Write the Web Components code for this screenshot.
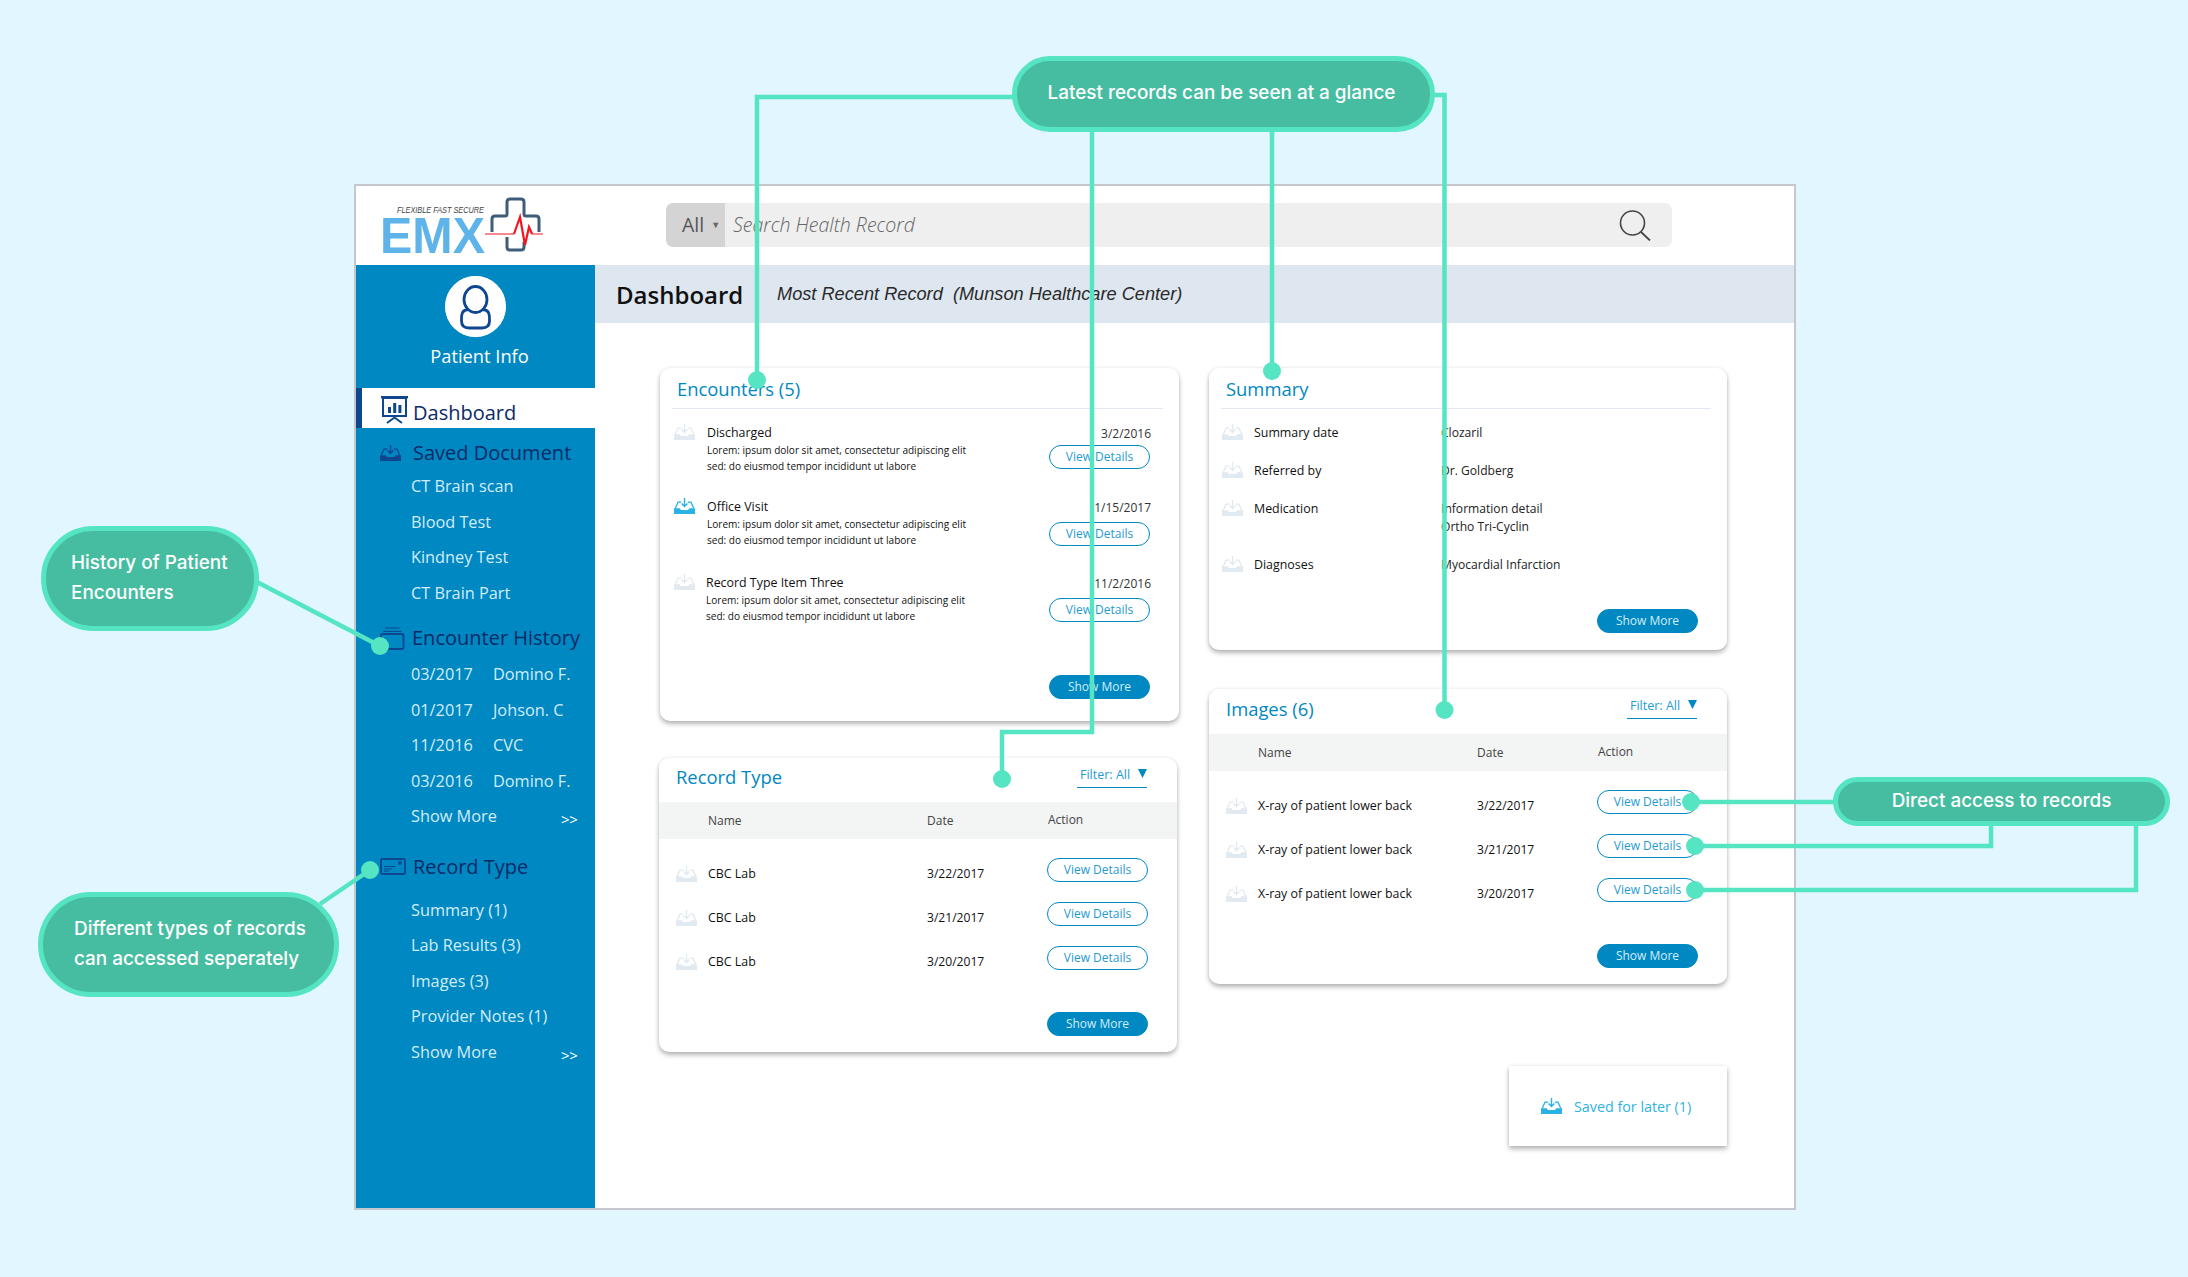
<!DOCTYPE html>
<html lang="en"><head><meta charset="utf-8"><title>EMX Dashboard</title>
<style>
html,body{margin:0;padding:0}
body{width:2188px;height:1277px;background:#E1F6FE;position:relative;overflow:hidden;font-family:"Open Sans","Noto Sans",sans-serif}
</style>
<script>
const BLUE='#0088C2',NAVY='#0B2A66',ICON='#0E4690',LINE='#55E5C2';
const tray=(c)=>`<svg width="21" height="16" viewBox="0 0 21 16" style="display:block"><path d="M10.5 0V8M7.6 5.4l2.9 3 2.9-3" fill="none" stroke="${c}" stroke-width="1.4"/><path d="M1.2 10.5L4 4.2H7.3M13.7 4.2H17l2.8 6.3" fill="none" stroke="${c}" stroke-width="1.3"/><path d="M0 10.2H5.6L7 12H14L15.4 10.2H21V16H0Z" fill="${c}"/></svg>`;
const icons={
 dash:`<svg width="28" height="28" viewBox="0 0 28 28" style="display:block"><path d="M0 1.2H27" stroke="${ICON}" stroke-width="2.4"/><rect x="2" y="2" width="23" height="18" fill="none" stroke="${ICON}" stroke-width="2"/><path d="M7 11h3v6H7zM12.2 7h3v10h-3zM17.4 9h3v8h-3z" fill="${ICON}"/><path d="M13.5 20v2M13.5 21.5L6 27M13.5 21.5L21 27" stroke="${ICON}" stroke-width="2" fill="none"/></svg>`,
 tray:`<div style="width:21px">${tray(ICON)}</div>`,
 hist:`<svg width="25" height="23" viewBox="0 0 25 23" style="display:block"><rect x="1" y="7" width="22.5" height="15" rx="1.5" fill="none" stroke="${ICON}" stroke-width="1.8"/><path d="M3 4.4H21.5M5 1H19.5" stroke="${ICON}" stroke-width="1" fill="none"/></svg>`,
 rec:`<svg width="26" height="17" viewBox="0 0 26 17" style="display:block"><rect x="1" y="1" width="24" height="15" rx="1.2" fill="none" stroke="${ICON}" stroke-width="1.8"/><circle cx="20" cy="5" r="1.9" fill="${ICON}"/><path d="M4 8.5H15M4 11H12M4 13H9" stroke="${ICON}" stroke-width="1"/></svg>`
};
function def(name,render){customElements.define(name,class extends HTMLElement{connectedCallback(){if(this.shadowRoot)return;const s=this.attachShadow({mode:'open'});s.innerHTML=render(this);}});}

def('emx-frame',()=>`<style>:host{display:block;box-sizing:border-box;position:absolute;left:354px;top:184px;width:1442px;height:1026px;border:2px solid #C4C8CC;background:#fff;overflow:hidden}
.g{display:grid;grid-template-columns:239px 1fr;grid-template-rows:79px 1fr;height:100%}
.t{grid-column:1/3}</style><div class="g"><div class="t"><slot name="top"></slot></div><slot name="side"></slot><slot name="main"></slot></div>`);

def('emx-topbar',()=>`<style>:host{display:flex;align-items:flex-start;height:79px}</style><slot></slot>`);

def('emx-logo',()=>`<style>:host{display:block;width:180px;height:75px;margin:4px 0 0 19px}svg{display:block}</style>
<svg width="180" height="75" viewBox="0 0 180 75">
<text x="22" y="23" font-family="Liberation Sans" font-style="italic" font-size="9.5" fill="#444" textLength="87" lengthAdjust="spacingAndGlyphs">FLEXIBLE FAST SECURE</text>
<text x="5" y="63" font-family="Liberation Sans" font-weight="700" font-size="50" fill="#5EB3E9" textLength="105" lengthAdjust="spacingAndGlyphs">EMX</text>
<path d="M117 42V29Q117 26 120 26H130Q132 26 132 24V12Q132 9 135 9H146Q149 9 149 12V24Q149 26 151 26H161Q164 26 164 29V42M132 47V57Q132 60 135 60H146Q149 60 149 57V52" fill="none" stroke="#3F5D78" stroke-width="3"/>
<path d="M110 44H139M157 44H168" fill="none" stroke="#F0151F" stroke-width="1"/>
<path d="M139 44L145 27L150 55L154 37L157 44" fill="none" stroke="#F0151F" stroke-width="2.2"/>
</svg>`);

def('emx-search',()=>`<style>:host{display:flex;width:1006px;height:44px;margin:17px 0 0 111px;background:#EFEFEF;border-radius:7px;overflow:hidden;align-items:center;position:relative}
.all{width:59px;box-sizing:border-box;padding:0 0 2px 16px;height:100%;background:#D4D4D4;display:flex;align-items:center;gap:7px;color:#555;font-size:19.5px;flex:none}
.all i{font-style:normal;font-size:9px;color:#666}
.ph{margin-left:8px;padding-bottom:2px;font-style:italic;font-weight:300;font-size:19.5px;color:#666;flex:1}
svg{margin-right:20px}</style>
<div class="all">All<i>▼</i></div><div class="ph">Search Health Record</div>
<svg width="33" height="31" viewBox="0 0 33 31"><circle cx="13.5" cy="13" r="12" fill="none" stroke="#444" stroke-width="1.6"/><path d="M22 22L31 30.5" stroke="#444" stroke-width="1.8"/></svg>`);

def('emx-sidebar',()=>`<style>:host{display:block;background:${BLUE};height:100%;font-family:"Open Sans",sans-serif}</style><slot></slot>`);

def('emx-patient',()=>`<style>:host{display:flex;flex-direction:column;align-items:center;height:123px;box-sizing:border-box;padding-top:11px;color:#fff}
.c{width:61px;height:61px;border-radius:50%;background:#fff;margin-left:-1px;display:block}
.l{font-size:18.3px;font-weight:500;line-height:24px;margin-top:7px;margin-left:8px}</style>
<svg class="c" viewBox="0 0 61 61"><circle cx="30.5" cy="30.5" r="30.5" fill="#fff"/><ellipse cx="30.5" cy="23.5" rx="11.5" ry="13" fill="none" stroke="${ICON}" stroke-width="2.8"/><path d="M23 33.5C17 34 16.5 38 16.5 43V45C16.5 50 19.5 52 24 52H37C41.5 52 44.5 50 44.5 45V43C44.5 38 44 34 38 33.5" fill="none" stroke="${ICON}" stroke-width="2.8"/></svg>
<div class="l">Patient Info</div>`);

def('emx-navhead',(h)=>`<style>:host{display:flex;align-items:center;height:30px;font-size:20px;color:${NAVY};line-height:30px;position:relative}
.i{width:var(--iw,57px);flex:none;box-sizing:border-box;padding-left:24px}
:host([active]){background:#fff;height:40px;box-sizing:border-box;border-left:6px solid ${ICON};align-items:flex-start}
:host([active]) .i{width:51px;padding:8px 0 0 19px}
:host([active]) .t{padding-top:10px}</style>
<div class="i">${icons[h.getAttribute('icon')]}</div><div class="t"><slot></slot></div>`);

def('emx-navitem',(h)=>`<style>:host{display:flex;box-sizing:border-box;height:35.5px;padding-top:1px;align-items:center;padding-left:55px;font-size:16.3px;color:#D3EDF8;position:relative}
.a{width:82px;flex:none}.m{position:absolute;left:205px;top:11px;color:#fff;font-size:15px;letter-spacing:-.4px}</style>
${h.hasAttribute('b')?`<div class="a">${h.getAttribute('a')}</div><div>${h.getAttribute('b')}</div>`:`<div>${h.getAttribute('a')}</div>`}${h.hasAttribute('more')?'<div class="m">&gt;&gt;</div>':''}`);

def('emx-main',()=>`<style>:host{display:block;min-width:0}</style><slot></slot>`);

def('emx-pagehead',()=>`<style>:host{display:flex;align-items:center;height:58px;background:#DEE7F0;padding-left:21px}
.t{width:161px;font-size:24px;font-weight:600;color:#111}
.s{font-family:"Liberation Sans",sans-serif;font-style:italic;font-size:18.2px;color:#2a2a2a;white-space:pre}</style>
<div class="t">Dashboard</div><div class="s">Most Recent Record  (Munson Healthcare Center)</div>`);

def('emx-board',()=>`<style>:host{display:grid;grid-template-columns:519px 518px;column-gap:30px;padding:45px 0 0 65px}
div{display:flex;flex-direction:column}</style><div><slot name="l"></slot></div><div><slot name="r"></slot></div>`);

def('emx-card',(h)=>`<style>:host{display:flex;flex-direction:column;box-sizing:border-box;background:#fff;border-radius:10px;box-shadow:0 3px 5px rgba(0,0,0,.28),0 0 4px rgba(0,0,0,.07);font-family:"Open Sans",sans-serif;color:#111}
.h{margin:0 16px 0 12px;height:40px;border-bottom:1px solid #E2E9F1;padding-left:5px;font-size:18.4px;line-height:42px;color:${BLUE};flex:none}
.f{margin-top:auto;display:flex;justify-content:flex-end;padding:0 29px var(--fb,17px) 0}</style>
<div class="h">${h.getAttribute('title')}</div><slot></slot><div class="f"><emx-btn solid>Show More</emx-btn></div>`);

def('emx-tablecard',(h)=>{const rows=JSON.parse(h.getAttribute('rows'));return `<style>:host{display:flex;flex-direction:column;box-sizing:border-box;background:#fff;border-radius:10px;box-shadow:0 3px 5px rgba(0,0,0,.28),0 0 4px rgba(0,0,0,.07);font-family:"Open Sans",sans-serif}
.h{display:flex;height:var(--hh,44px);flex:none;box-sizing:border-box;padding:0 30px 0 17px}
.ti{font-size:18.4px;line-height:var(--tl,38px);color:${BLUE}}
.fl{margin-left:auto;margin-top:7px;height:23px;width:70px;box-sizing:border-box;border-bottom:1.5px solid ${BLUE};color:#1F9BD1;font-size:12.5px;font-weight:500;line-height:20px;padding-left:3px;position:relative;white-space:nowrap}
.fl svg{position:absolute;right:0;top:4px}
.b,.r{display:grid;grid-template-columns:49px 219px 120px auto}
.b{height:37px;background:#F3F5F5;align-items:center;font-size:12px;color:#444;margin-bottom:9px}
.b .a{margin-top:-2px;margin-left:1px}
.r{height:44px;font-size:12.4px;font-weight:500;color:#111;align-items:center}
.r .c{padding-top:6px}
.r .d{font-size:12.1px}
.r .ic{padding:8px 0 0 17px}
.f{margin-top:auto;display:flex;justify-content:flex-end;padding:0 29px 16px 0}</style>
<div class="h"><div class="ti">${h.getAttribute('title')}</div><div class="fl">Filter: All<svg width="9" height="9" viewBox="0 0 9 9"><path d="M0 0H9L4.5 9Z" fill="${BLUE}"/></svg></div></div>
<div class="b"><span></span><span>Name</span><span>Date</span><span class="a">Action</span></div>
${rows.map(r=>`<div class="r"><div class="c ic">${tray('#E1E9F1')}</div><div class="c">${r[0]}</div><div class="c d">${r[1]}</div><emx-btn>View Details</emx-btn></div>`).join('')}
<div class="f"><emx-btn solid>Show More</emx-btn></div>`});

def('emx-btn',()=>`<style>:host{display:flex;box-sizing:border-box;width:101px;height:24px;border:1.5px solid ${BLUE};border-radius:12px;justify-content:center;align-items:center;padding-bottom:2px;background:#fff;color:#1F9BD1;font:400 12px "Open Sans",sans-serif;flex:none;white-space:nowrap}
:host([solid]){background:${BLUE};color:#D3EDF8}</style><slot></slot>`);

def('emx-encrow',(h)=>`<style>:host{display:grid;grid-template-columns:33px 1fr 101px;padding:0 29px 0 14px;height:var(--h,74px);box-sizing:border-box;color:#111}
.x{margin:-1px 0 0 var(--tx,0)}
.t{font-size:12.4px;font-weight:500;line-height:19px}
.l{font-size:10.05px;line-height:16px;color:#111}
.d{font-size:12px;line-height:19px;text-align:right;color:#333;margin-right:-1px;white-space:nowrap;height:var(--dh,21px)}</style>
<div>${tray(h.hasAttribute('on')?'#29B2E3':'#E1E9F1')}</div>
<div class="x"><div class="t">${h.getAttribute('t')}</div><div class="l">Lorem: ipsum dolor sit amet, consectetur adipiscing elit<br>sed: do eiusmod tempor incididunt ut labore</div></div>
<div><div class="d">${h.getAttribute('d')}</div><emx-btn>View Details</emx-btn></div>`);

def('emx-sumrow',(h)=>`<style>:host{display:grid;grid-template-columns:32px 187px 1fr;padding:0 0 20px 13px;font-size:12.1px;line-height:18px;color:#222}
.t{font-weight:500;font-size:12.4px;color:#111}</style>
<div>${tray('#E1E9F1')}</div><div class="t">${h.getAttribute('t')}</div><div><slot></slot></div>`);

def('emx-saved',()=>`<style>:host{display:flex;align-items:center;box-sizing:border-box;background:#fff;box-shadow:0 3px 5px rgba(0,0,0,.28),0 0 4px rgba(0,0,0,.07);font:500 14.3px "Open Sans",sans-serif;color:#2FB3E2;padding-left:32px;gap:12px}</style>${tray('#29B2E3')}<span>Saved for later (1)</span>`);

def('emx-callout',(h)=>`<style>:host{display:flex;flex-direction:column;justify-content:center;box-sizing:border-box;position:absolute;background:#46BDA1;border:5px solid ${LINE};color:#fff;font:500 18.9px/30px Inter,sans-serif;border-radius:60px;white-space:nowrap;padding-bottom:2px}</style><slot></slot>`);

def('emx-links',()=>{const c=[[757,380],[1002,779],[1272,371],[1444.5,710],[380,646],[370,870],[1691,802],[1695,846],[1695,890]];
return `<style>:host{display:block;position:absolute;left:0;top:0;width:2188px;height:1277px;pointer-events:none}svg{display:block}</style>
<svg width="2188" height="1277"><g fill="none" stroke="${LINE}" stroke-width="4.5">
<path d="M1015 97H757V380"/><path d="M1092 130V732H1002V779"/><path d="M1272 130V371"/><path d="M1432 95H1444.5V710"/>
<path d="M1691 802H1836"/><path d="M1695 846H1991V824"/><path d="M1695 890H2136V824"/>
<path d="M257 582L380 646"/><path d="M320 904L370 870"/></g>
<g fill="${LINE}">${c.map(p=>`<circle cx="${p[0]}" cy="${p[1]}" r="9"/>`).join('')}</g></svg>`});
</script></head>
<body>
<emx-frame>
 <emx-topbar slot="top"><emx-logo></emx-logo><emx-search></emx-search></emx-topbar>
 <emx-sidebar slot="side">
  <emx-patient></emx-patient>
  <emx-navhead active icon="dash">Dashboard</emx-navhead>
  <emx-navhead icon="tray" style="margin-top:10px">Saved Document</emx-navhead>
  <emx-navitem a="CT Brain scan"></emx-navitem>
  <emx-navitem a="Blood Test"></emx-navitem>
  <emx-navitem a="Kindney Test"></emx-navitem>
  <emx-navitem a="CT Brain Part"></emx-navitem>
  <emx-navhead icon="hist" style="margin-top:13px;margin-bottom:3px;--iw:56px">Encounter History</emx-navhead>
  <emx-navitem a="03/2017" b="Domino F."></emx-navitem>
  <emx-navitem a="01/2017" b="Johson. C"></emx-navitem>
  <emx-navitem a="11/2016" b="CVC"></emx-navitem>
  <emx-navitem a="03/2016" b="Domino F."></emx-navitem>
  <emx-navitem a="Show More" more></emx-navitem>
  <emx-navhead icon="rec" style="margin-top:18px;margin-bottom:10px">Record Type</emx-navhead>
  <emx-navitem a="Summary (1)"></emx-navitem>
  <emx-navitem a="Lab Results (3)"></emx-navitem>
  <emx-navitem a="Images (3)"></emx-navitem>
  <emx-navitem a="Provider Notes (1)"></emx-navitem>
  <emx-navitem a="Show More" more></emx-navitem>
 </emx-sidebar>
 <emx-main slot="main">
  <emx-pagehead></emx-pagehead>
  <emx-board>
   <emx-card slot="l" title="Encounters (5)" style="height:353px;--fb:22px">
    <emx-encrow t="Discharged" d="3/2/2016" style="margin-top:15px"></emx-encrow>
    <emx-encrow on t="Office Visit" d="1/15/2017" style="--h:76px;--dh:24px"></emx-encrow>
    <emx-encrow t="Record Type Item Three" d="11/2/2016" style="--dh:24px;--tx:-1px"></emx-encrow>
   </emx-card>
   <emx-tablecard slot="l" title="Record Type" style="height:294px;margin:37px 2px 0 -1px" rows='[["CBC Lab","3/22/2017"],["CBC Lab","3/21/2017"],["CBC Lab","3/20/2017"]]'></emx-tablecard>
   <emx-card slot="r" title="Summary" style="height:282px">
    <emx-sumrow t="Summary date" style="margin-top:15px">Clozaril</emx-sumrow>
    <emx-sumrow t="Referred by">Dr. Goldberg</emx-sumrow>
    <emx-sumrow t="Medication">Information detail<br>Ortho Tri-Cyclin</emx-sumrow>
    <emx-sumrow t="Diagnoses">Myocardial Infarction</emx-sumrow>
   </emx-card>
   <emx-tablecard slot="r" title="Images (6)" style="height:295px;margin-top:39px;--hh:45px;--tl:40px" rows='[["X-ray of patient lower back","3/22/2017"],["X-ray of patient lower back","3/21/2017"],["X-ray of patient lower back","3/20/2017"]]'></emx-tablecard>
   <emx-saved slot="r" style="height:80px;width:218px;margin:82px 0 0 300px"></emx-saved>
  </emx-board>
 </emx-main>
</emx-frame>
<emx-links></emx-links>
<emx-callout style="left:1012px;top:56px;width:423px;height:76px;align-items:center;padding-right:4px">Latest records can be seen at a glance</emx-callout>
<emx-callout style="left:41px;top:526px;width:218px;height:105px;padding-left:25px">History of Patient<br>Encounters</emx-callout>
<emx-callout style="left:38px;top:892px;width:301px;height:105px;padding-left:31px">Different types of records<br>can accessed seperately</emx-callout>
<emx-callout style="left:1833px;top:777px;width:337px;height:49px;align-items:center">Direct access to records</emx-callout>
</body></html>
